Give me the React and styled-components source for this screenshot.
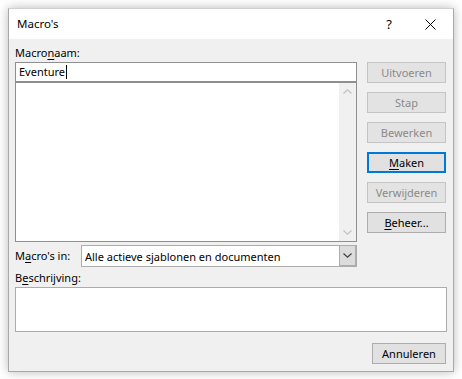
import styled, { createGlobalStyle, css } from "styled-components";

const GlobalStyle = createGlobalStyle`
  html, body {
    margin: 0;
    padding: 0;
    background: #ffffff;
  }
  body {
    font-family: "Noto Sans", "Open Sans", Arial, sans-serif;
    font-size: 11px;
    color: #000000;
  }
`;

const Page = styled.div`
  padding: 8px;
`;

const Window = styled.div`
  width: 446px;
  height: 364px;
  box-sizing: border-box;
  border: 1px solid #a8a8a8;
  border-top-color: #d0d0d0;
  background: #f0f0f0;
  box-shadow: 0 0 10px rgba(0, 0, 0, 0.28);
  display: flex;
  flex-direction: column;
`;

const TitleBar = styled.div`
  height: 30px;
  background: #ffffff;
  display: flex;
  align-items: center;
  padding-left: 8px;
`;

const Title = styled.div`
  flex: 1;
  font-size: 11.5px;
  line-height: 16px;
  padding-bottom: 1px;
`;

const CaptionButton = styled.div`
  width: ${(p) => p.$w}px;
  height: 30px;
  display: flex;
  align-items: center;
  justify-content: center;
  font-size: 13px;
`;

const Body = styled.div`
  flex: 1;
  padding: 6px 6px 0 6px;
  display: flex;
  flex-direction: column;
`;

const Main = styled.div`
  display: grid;
  grid-template-columns: 342px 79px;
  column-gap: 10px;
`;

const LeftColumn = styled.div`
  display: flex;
  flex-direction: column;
`;

const Label = styled.div`
  height: 16px;
  line-height: 16px;
  margin-bottom: 1px;
  margin-top: ${(p) => p.$top || 0}px;
  white-space: nowrap;
`;

const Key = styled.span`
  text-decoration: underline;
  text-underline-offset: 2px;
`;

const TextInput = styled.div`
  height: 20px;
  box-sizing: border-box;
  border: 1px solid #8f8f8f;
  background: #ffffff;
  display: flex;
  align-items: center;
  padding-left: 3px;
  line-height: 16px;
`;

const Caret = styled.span`
  display: inline-block;
  width: 1px;
  height: 14px;
  background: #000000;
  margin-left: 1px;
  vertical-align: middle;
`;

const ListBox = styled.div`
  height: 160px;
  box-sizing: border-box;
  border: 1px solid #8f8f8f;
  background: #ffffff;
  display: flex;
  justify-content: flex-end;
`;

const ScrollTrack = styled.div`
  width: 17px;
  background: #f0f0f0;
  display: flex;
  flex-direction: column;
  justify-content: space-between;
  align-items: center;
`;

const ScrollArrow = styled.div`
  width: 17px;
  height: 17px;
  display: flex;
  align-items: center;
  justify-content: center;
`;

const SelectRow = styled.div`
  margin-top: 3px;
  display: flex;
  align-items: center;
`;

const SelectLabel = styled.div`
  width: 66px;
  line-height: 16px;
  white-space: nowrap;
`;

const Select = styled.div`
  flex: 1;
  height: 22px;
  box-sizing: border-box;
  border: 1px solid #acacac;
  background: #ffffff;
  display: flex;
`;

const SelectValue = styled.div`
  flex: 1;
  display: flex;
  align-items: center;
  padding-left: 3px;
  white-space: nowrap;
  overflow: hidden;
`;

const DropButton = styled.div`
  width: 17px;
  box-sizing: border-box;
  border-left: 1px solid #acacac;
  border-right: 1px solid #acacac;
  border-bottom: 1px solid #acacac;
  background: #dcdcdc;
  display: flex;
  align-items: center;
  justify-content: center;
`;

const ButtonColumn = styled.div`
  padding-top: 17px;
  display: flex;
  flex-direction: column;
  gap: 9px;
`;

const Button = styled.div`
  height: 21px;
  width: ${(p) => p.$w || 79}px;
  box-sizing: border-box;
  display: flex;
  align-items: center;
  justify-content: center;
  line-height: 16px;
  background: #e1e1e1;
  border: 1px solid #adadad;
  color: #000000;
  white-space: nowrap;
  ${(p) =>
    p.$disabled &&
    css`
      background: #e3e3e3;
      border-color: #c4c4c4;
      color: #8a8a8a;
    `}
  ${(p) =>
    p.$default &&
    css`
      border: 2px solid #0078d7;
    `}
`;

const DescriptionBox = styled.div`
  width: 432px;
  height: 45px;
  box-sizing: border-box;
  border: 1px solid #acacac;
  background: #ffffff;
`;

const Footer = styled.div`
  margin-top: 11px;
  width: 431px;
  display: flex;
  justify-content: flex-end;
`;

const CloseIcon = () => (
  <svg width="11" height="11" viewBox="0 0 11 11">
    <path d="M0.5 0.5 L10.5 10.5 M10.5 0.5 L0.5 10.5" stroke="#000" strokeWidth="1" fill="none" />
  </svg>
);

const Chevron = ({ up, color }) => (
  <svg width="9" height="5" viewBox="0 0 9 5">
    <path
      d={up ? "M0.5 4.5 L4.5 0.8 L8.5 4.5" : "M0.5 0.5 L4.5 4.2 L8.5 0.5"}
      stroke={color}
      strokeWidth="1.2"
      fill="none"
    />
  </svg>
);

const buttons = [
  { label: "Uitvoeren", disabled: true },
  { label: "Stap", disabled: true },
  { label: "Bewerken", disabled: true },
  { label: "aken", key: "M", isDefault: true },
  { label: "Verwijderen", disabled: true },
  { label: "eheer...", key: "B" },
];

export default function App() {
  return (
    <>
      <GlobalStyle />
      <Page>
        <Window>
          <TitleBar>
            <Title>Macro's</Title>
            <CaptionButton $w={36}>?</CaptionButton>
            <CaptionButton $w={46}>
              <CloseIcon />
            </CaptionButton>
          </TitleBar>
          <Body>
            <Main>
              <LeftColumn>
                <Label>
                  Macro<Key>n</Key>aam:
                </Label>
                <TextInput>
                  Eventure
                  <Caret />
                </TextInput>
                <ListBox>
                  <ScrollTrack>
                    <ScrollArrow>
                      <Chevron up color="#c2c2c2" />
                    </ScrollArrow>
                    <ScrollArrow>
                      <Chevron color="#c2c2c2" />
                    </ScrollArrow>
                  </ScrollTrack>
                </ListBox>
                <SelectRow>
                  <SelectLabel>
                    M<Key>a</Key>cro's in:
                  </SelectLabel>
                  <Select>
                    <SelectValue>Alle actieve sjablonen en documenten</SelectValue>
                    <DropButton>
                      <Chevron color="#404040" />
                    </DropButton>
                  </Select>
                </SelectRow>
              </LeftColumn>
              <ButtonColumn>
                {buttons.map((b, i) => (
                  <Button key={i} $disabled={b.disabled} $default={b.isDefault}>
                    {b.key && <Key>{b.key}</Key>}
                    {b.label}
                  </Button>
                ))}
              </ButtonColumn>
            </Main>
            <Label $top={3}>
              B<Key>e</Key>schrijving:
            </Label>
            <DescriptionBox />
            <Footer>
              <Button $w={74}>Annuleren</Button>
            </Footer>
          </Body>
        </Window>
      </Page>
    </>
  );
}
